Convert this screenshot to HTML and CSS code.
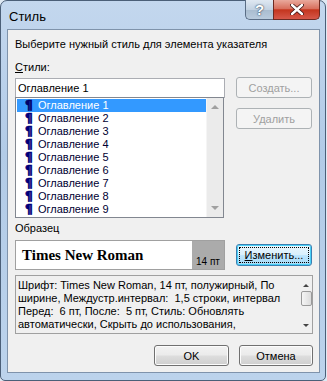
FILE: index.html
```html
<!DOCTYPE html>
<html lang="ru">
<head>
    <meta charset="UTF-8">
    <title>Стиль</title>
    <link rel="stylesheet" href="styles.css">
</head>
<body>
    <div class="window">
        <div class="titlebar">
            <span class="title">Стиль</span>
            <div class="caption-btns">
                <span class="cap-btn cap-help">?</span>
                <span class="cap-btn cap-close">
                    <svg width="14" height="11" viewBox="0 0 14 11">
                        <path d="M2 1 L12 10 M12 1 L2 10" stroke="#3a1010" stroke-width="4" stroke-linecap="round"/>
                        <path d="M2 1 L12 10 M12 1 L2 10" stroke="#ffffff" stroke-width="2.4" stroke-linecap="round"/>
                    </svg>
                </span>
            </div>
        </div>

        <div class="client">
            <p class="intro">Выберите нужный стиль для элемента указателя</p>

            <div class="label"><u>С</u>тили:</div>
            <div class="styles-row">
                <div class="styles-col">
                    <div class="textbox">Оглавление 1</div>
                    <div class="listbox">
                        <ul class="items">
                            <li class="selected"><span class="pil">¶</span>Оглавление 1</li>
                            <li><span class="pil">¶</span>Оглавление 2</li>
                            <li><span class="pil">¶</span>Оглавление 3</li>
                            <li><span class="pil">¶</span>Оглавление 4</li>
                            <li><span class="pil">¶</span>Оглавление 5</li>
                            <li><span class="pil">¶</span>Оглавление 6</li>
                            <li><span class="pil">¶</span>Оглавление 7</li>
                            <li><span class="pil">¶</span>Оглавление 8</li>
                            <li><span class="pil">¶</span>Оглавление 9</li>
                        </ul>
                        <div class="vscroll">
                            <span class="arr arr-up"></span>
                            <span class="arr arr-down"></span>
                        </div>
                    </div>
                </div>
                <div class="side-btns">
                    <button class="btn" disabled>Создать...</button>
                    <button class="btn" disabled>Удалить</button>
                </div>
            </div>

            <div class="label label-sample">Образец</div>
            <div class="sample-row">
                <div class="preview">
                    <div class="preview-text">Times New Roman</div>
                    <div class="preview-size">14 пт</div>
                </div>
                <button class="btn btn-focus"><span class="focus-rect"><u>И</u>зменить...</span></button>
            </div>

            <div class="desc">
                <div class="desc-text">
                    <div>Шрифт: Times New Roman, 14 пт, полужирный, По</div>
                    <div>ширине, Междустр.интервал:&nbsp; 1,5 строки, интервал</div>
                    <div>Перед:&nbsp; 6 пт, После:&nbsp; 5 пт, Стиль: Обновлять</div>
                    <div>автоматически, Скрыть до использования,</div>
                </div>
                <div class="desc-scroll">
                    <span class="arr arr-up"></span>
                    <span class="thumb"></span>
                    <span class="arr arr-down"></span>
                </div>
            </div>

            <div class="footer">
                <button class="btn btn-ok">OK</button>
                <button class="btn btn-cancel">Отмена</button>
            </div>
        </div>
    </div>
</body>
</html>
```

FILE: styles.css
```css
* {
    margin: 0;
    padding: 0;
    box-sizing: border-box;
}

body {
    background: #dfe9f3;
    font-family: 'Liberation Sans', Arial, sans-serif;
    font-size: 11px;
    color: #000;
}

.window {
    width: 326px;
    height: 381px;
    border: 1px solid #4b5f78;
    border-radius: 7px 7px 5px 5px;
    background: linear-gradient(180deg, #c3d7ee 0%, #b2cbe7 40%, #bcd3ec 100%);
    padding: 0 5px 7px 6px;
    display: flex;
    flex-direction: column;
}

.titlebar {
    height: 28px;
    display: flex;
    align-items: flex-start;
}

.title {
    padding: 8px 0 0 2px;
    font-size: 13px;
    color: #000;
}

.caption-btns {
    margin-left: auto;
    margin-top: -1px;
    display: flex;
}

.cap-btn {
    height: 20px;
    display: flex;
    align-items: center;
    justify-content: center;
    border: 1px solid #5a6d85;
    border-top: none;
}

.cap-help {
    width: 28px;
    border-radius: 0 0 0 5px;
    border-right: none;
    background: linear-gradient(180deg, #dfe8f2 0%, #c3d2e2 50%, #a9bccf 52%, #b9cbdd 100%);
    color: #fff;
    font-weight: bold;
    font-size: 15px;
    text-shadow: 0 0 2px #33475e, 0 0 1px #33475e;
}

.cap-close {
    width: 47px;
    border-radius: 0 0 5px 0;
    border-color: #6d2a22;
    background: linear-gradient(180deg, #e9a99c 0%, #d8705e 45%, #c4351e 52%, #d6584a 100%);
}

.client {
    width: 313px;
    height: 344px;
    border: 1px solid #7f93ab;
    background: #f0f0f0;
    padding: 0 0 0 7px;
}

.intro {
    margin-top: 7px;
    line-height: 14px;
}

.label {
    margin-top: 9px;
    line-height: 14px;
}

.styles-row {
    display: flex;
    margin-top: 4px;
}

.styles-col {
    width: 210px;
}

.textbox {
    height: 20px;
    border: 1px solid #abadb3;
    background: #fff;
    padding: 2px 0 0 2px;
    line-height: 15px;
}

.listbox {
    height: 121px;
    width: 209px;
    margin-top: -1px;
    border: 1px solid #828790;
    background: #fff;
    display: flex;
}

.items {
    list-style: none;
    flex: 1;
    padding: 1px 0 0 1px;
}

.items li {
    height: 13px;
    line-height: 13px;
    padding-left: 8px;
    color: #000033;
}

.items li.selected {
    background: #3399ff;
    color: #fff;
}

.pil {
    display: inline-block;
    width: 13px;
    font-family: 'DejaVu Sans', sans-serif;
    font-weight: bold;
    color: #00007a;
    font-size: 12px;
    -webkit-text-stroke: 0.7px #00007a;
}

.selected .pil {
    color: #00006a;
    -webkit-text-stroke-color: #00006a;
}

.vscroll {
    width: 17px;
    background: #ebebeb;
    border-left: 1px solid #f5f5f5;
    display: flex;
    flex-direction: column;
    justify-content: space-between;
    align-items: center;
    padding: 7px 0 7px;
}

.arr {
    width: 0;
    height: 0;
    border-left: 4px solid transparent;
    border-right: 4px solid transparent;
}

.arr-up {
    border-bottom: 4px solid #a0a0a0;
}

.arr-down {
    border-top: 4px solid #a0a0a0;
}

.side-btns {
    margin-left: 11px;
    display: flex;
    flex-direction: column;
    gap: 10px;
    margin-top: -1px;
}

.btn {
    width: 76px;
    height: 21px;
    border: 1px solid #707070;
    border-radius: 3px;
    background: linear-gradient(180deg, #f2f2f2 0%, #ebebeb 48%, #dddddd 52%, #cfcfcf 100%);
    font-family: 'Liberation Sans', Arial, sans-serif;
    font-size: 11px;
    color: #000;
    box-shadow: inset 0 0 0 1px #fcfcfc;
}

.btn:disabled {
    background: #f4f4f4;
    border-color: #adb2b5;
    color: #a0a0a0;
    box-shadow: none;
}

.label-sample {
    margin-top: 3px;
}

.sample-row {
    display: flex;
    align-items: center;
    margin-top: 5px;
}

.preview {
    width: 210px;
    height: 30px;
    border: 1px solid #a0a0a0;
    background: #fff;
    display: flex;
}

.preview-text {
    flex: 1;
    font-family: 'Liberation Serif', 'Times New Roman', serif;
    font-weight: bold;
    font-size: 15px;
    padding: 6px 0 0 6px;
}

.preview-size {
    width: 32px;
    background: #ababab;
    font-size: 10px;
    padding: 15px 0 0 4px;
}

.btn-focus {
    margin-left: 11px;
    height: 22px;
    border-color: #3c7fb1;
    box-shadow: inset 0 0 0 1px #48d0f7;
    background: linear-gradient(180deg, #eaf6fd 0%, #d9f0fc 48%, #bee6fd 52%, #a7d9f5 100%);
    padding: 2px;
}

.focus-rect {
    display: block;
    height: 16px;
    line-height: 14px;
    border: 1px dotted #000;
}

.desc {
    margin-top: 5px;
    width: 298px;
    height: 59px;
    border: 1px solid #a0a0a0;
    display: flex;
}

.desc-text {
    flex: 1;
    padding: 3px 0 0 2px;
    line-height: 13px;
    white-space: nowrap;
    overflow: hidden;
}

.desc-scroll {
    width: 12px;
    margin: 2px 0 2px;
    display: flex;
    flex-direction: column;
    align-items: center;
    padding: 6px 0 4px;
}

.desc-scroll .arr-up {
    border-bottom-color: #444;
    border-left-width: 3px;
    border-right-width: 3px;
    border-bottom-width: 3px;
}

.desc-scroll .arr-down {
    border-top-color: #444;
    border-left-width: 3px;
    border-right-width: 3px;
    border-top-width: 3px;
    margin-top: auto;
}

.thumb {
    width: 11px;
    height: 15px;
    margin-top: 4px;
    border: 1px solid #9a9a9a;
    border-radius: 2px;
    background: linear-gradient(90deg, #f5f5f5, #dcdcdc);
}

.footer {
    display: flex;
    gap: 10px;
    margin-top: 11px;
    padding-left: 139px;
}

.btn-ok {
    width: 75px;
}

.btn-cancel {
    width: 74px;
}
```
